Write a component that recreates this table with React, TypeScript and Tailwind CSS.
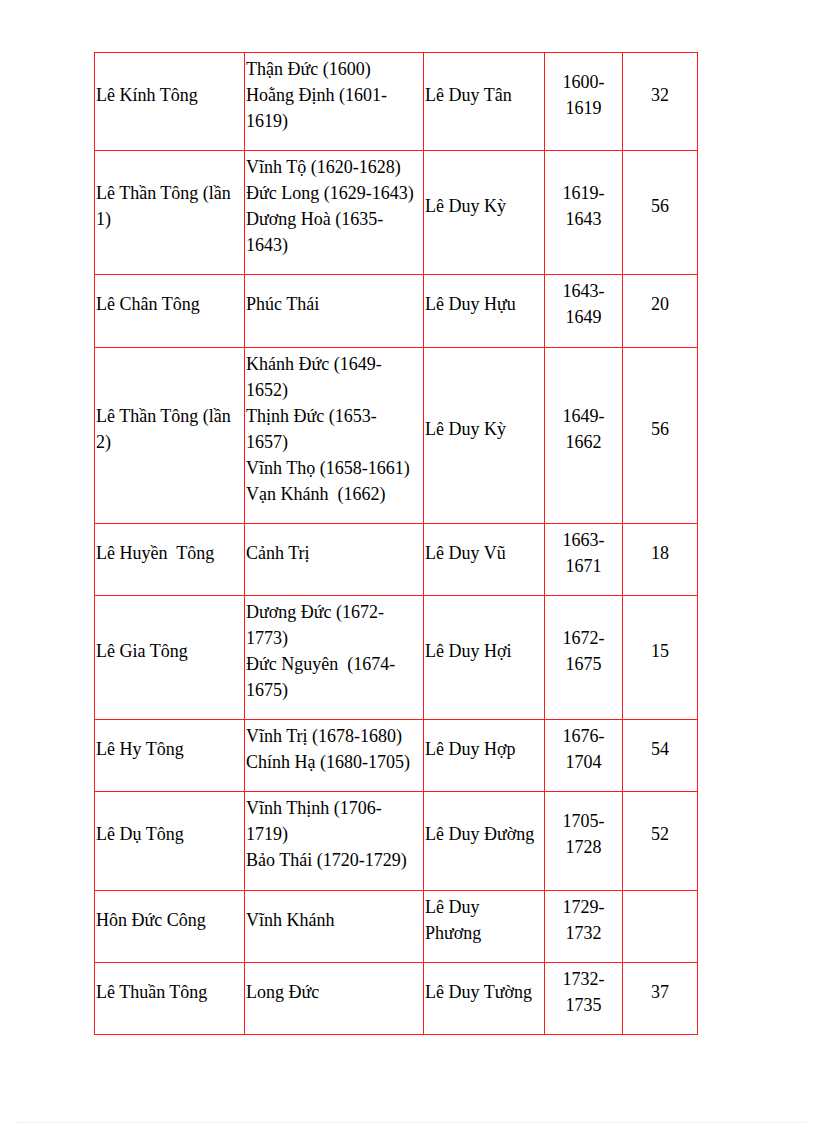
type Row = {
  king: string[];
  era: string[];
  name: string[];
  years: [string, string];
  count: string;
};

const rows: Row[] = [
  {
    king: ['Lê Kính Tông'],
    era: ['Thận Đức (1600)', 'Hoằng Định (1601-', '1619)'],
    name: ['Lê Duy Tân'],
    years: ['1600-', '1619'],
    count: '32',
  },
  {
    king: ['Lê Thần Tông (lần', '1)'],
    era: ['Vĩnh Tộ (1620-1628)', 'Đức Long (1629-1643)', 'Dương Hoà (1635-', '1643)'],
    name: ['Lê Duy Kỳ'],
    years: ['1619-', '1643'],
    count: '56',
  },
  {
    king: ['Lê Chân Tông'],
    era: ['Phúc Thái'],
    name: ['Lê Duy Hựu'],
    years: ['1643-', '1649'],
    count: '20',
  },
  {
    king: ['Lê Thần Tông (lần', '2)'],
    era: [
      'Khánh Đức (1649-',
      '1652)',
      'Thịnh Đức (1653-',
      '1657)',
      'Vĩnh Thọ (1658-1661)',
      'Vạn Khánh  (1662)',
    ],
    name: ['Lê Duy Kỳ'],
    years: ['1649-', '1662'],
    count: '56',
  },
  {
    king: ['Lê Huyền  Tông'],
    era: ['Cảnh Trị'],
    name: ['Lê Duy Vũ'],
    years: ['1663-', '1671'],
    count: '18',
  },
  {
    king: ['Lê Gia Tông'],
    era: ['Dương Đức (1672-', '1773)', 'Đức Nguyên  (1674-', '1675)'],
    name: ['Lê Duy Hợi'],
    years: ['1672-', '1675'],
    count: '15',
  },
  {
    king: ['Lê Hy Tông'],
    era: ['Vĩnh Trị (1678-1680)', 'Chính Hạ (1680-1705)'],
    name: ['Lê Duy Hợp'],
    years: ['1676-', '1704'],
    count: '54',
  },
  {
    king: ['Lê Dụ Tông'],
    era: ['Vĩnh Thịnh (1706-', '1719)', 'Bảo Thái (1720-1729)'],
    name: ['Lê Duy Đường'],
    years: ['1705-', '1728'],
    count: '52',
  },
  {
    king: ['Hôn Đức Công'],
    era: ['Vĩnh Khánh'],
    name: ['Lê Duy', 'Phương'],
    years: ['1729-', '1732'],
    count: '',
  },
  {
    king: ['Lê Thuần Tông'],
    era: ['Long Đức'],
    name: ['Lê Duy Tường'],
    years: ['1732-', '1735'],
    count: '37',
  },
];

function Lines({ items }: { items: string[] }) {
  return (
    <>
      {items.map((t, i) => (
        <div key={i} className="whitespace-pre">
          {t}
        </div>
      ))}
    </>
  );
}

export default function App() {
  const cell = 'border border-[#ff1a1a] align-middle pt-[3px] pb-[16.2px]';
  return (
    <div className="relative h-[1123px] w-[816px] bg-white text-black font-['Liberation_Serif','Times_New_Roman',serif] text-[18px] leading-[26px]">
      <div className="pt-[52px] pl-[94px]">
        <table className="border-collapse table-fixed w-[603px]">
          <colgroup>
            <col className="w-[150px]" />
            <col className="w-[179px]" />
            <col className="w-[121px]" />
            <col className="w-[78px]" />
            <col className="w-[75px]" />
          </colgroup>
          <tbody>
            {rows.map((r, i) => (
              <tr key={i}>
                <td className={`${cell} pl-[1px]`}>
                  <Lines items={r.king} />
                </td>
                <td className={`${cell} pl-[1px]`}>
                  <Lines items={r.era} />
                </td>
                <td className={`${cell} pl-[1px]`}>
                  <Lines items={r.name} />
                </td>
                <td className={`${cell} text-center`}>
                  <Lines items={r.years} />
                </td>
                <td className={`${cell} text-center`}>{r.count}</td>
              </tr>
            ))}
          </tbody>
        </table>
      </div>
      <div className="absolute bottom-0 left-[16px] right-[10px] border-b border-dotted border-[#c8f4f4]" />
    </div>
  );
}
